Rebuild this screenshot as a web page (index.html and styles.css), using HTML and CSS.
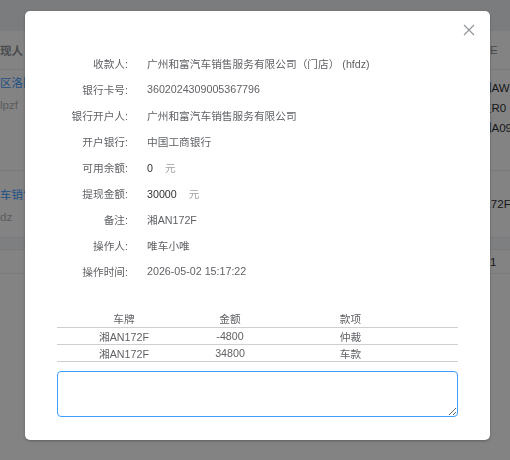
FILE: index.html
```html
<!DOCTYPE html>
<html>

<head>
    <title>提现详情</title>
    <link rel="stylesheet" href="styles.css">
</head>

<body>
    <div class="page">
        <div class="bg_top"></div>
        <div class="bg_row bg_head">
            <div class="bg_left">现人</div>
            <div class="bg_right">E</div>
        </div>
        <div class="bg_row bg_r1">
            <div class="bg_left">
                <div class="link">区洛阳路店</div>
                <div class="sub">lpzf</div>
            </div>
            <div class="bg_right">
                <div>湘AW</div>
                <div>生R0</div>
                <div>湘A09</div>
            </div>
        </div>
        <div class="bg_row bg_r2">
            <div class="bg_left">
                <div class="link">车销售</div>
                <div class="sub">dz</div>
            </div>
            <div class="bg_right"><span class="plate">湘AN172F</span></div>
        </div>
        <div class="bg_band"></div>
        <div class="bg_row bg_r3">
            <div class="bg_left"></div>
            <div class="bg_right">1</div>
        </div>
    </div>

    <div class="mask">
        <div class="dialog">
            <button class="close_btn" aria-label="关闭">
                <svg width="12" height="12" viewBox="0 0 12 12">
                    <path d="M1 1 L11 11 M11 1 L1 11" stroke="#909399" stroke-width="1.1" fill="none"/>
                </svg>
            </button>

            <div class="info">
                <label>收款人:</label>
                <span>广州和富汽车销售服务有限公司（门店） (hfdz)</span>
                <label>银行卡号:</label>
                <span>3602024309005367796</span>
                <label>银行开户人:</label>
                <span>广州和富汽车销售服务有限公司</span>
                <label>开户银行:</label>
                <span>中国工商银行</span>
                <label>可用余额:</label>
                <span><b class="amount">0</b><i class="unit">元</i></span>
                <label>提现金额:</label>
                <span><b class="amount">30000</b><i class="unit">元</i></span>
                <label>备注:</label>
                <span>湘AN172F</span>
                <label>操作人:</label>
                <span>唯车小唯</span>
                <label>操作时间:</label>
                <span>2026-05-02 15:17:22</span>
            </div>

            <table class="detail">
                <tr>
                    <th class="c1">车牌</th>
                    <th class="c2">金额</th>
                    <th class="c3">款项</th>
                </tr>
                <tr>
                    <td class="c1">湘AN172F</td>
                    <td class="c2">-4800</td>
                    <td class="c3">仲裁</td>
                </tr>
                <tr>
                    <td class="c1">湘AN172F</td>
                    <td class="c2">34800</td>
                    <td class="c3">车款</td>
                </tr>
            </table>

            <textarea class="remark"></textarea>
        </div>
    </div>
</body>

</html>
```

FILE: styles.css
```css
body {
    margin: 0;
    width: 510px;
    height: 460px;
    overflow: hidden;
    font-family: "Liberation Sans", "Noto Sans CJK SC", sans-serif;
    background: #fff;
}

/* page behind the dialog */
.page {
    font-size: 11.5px;
    color: #303133;
}

.bg_top {
    height: 31px;
    background: #f0f2f5;
}

.bg_row {
    display: flex;
    justify-content: space-between;
    border-bottom: 1px solid #ebeef5;
    white-space: nowrap;
}

.bg_left {
    width: 60px;
}

.bg_right {
    width: 30px;
    overflow: hidden;
}

.bg_head {
    height: 38px;
    align-items: center;
    font-weight: bold;
    color: #909399;
}

.bg_head .bg_right {
    font-weight: normal;
    color: #909399;
    width: 20px;
}

.bg_r1 {
    height: 100px;
}

.bg_r1 .bg_left {
    padding-top: 3px;
}

.bg_r1 .bg_right {
    padding-top: 8px;
    line-height: 20px;
}

.bg_r2 {
    height: 66px;
}

.bg_r2 .bg_left {
    padding-top: 14px;
}

.bg_r2 .bg_right {
    padding-top: 24px;
}

.plate {
    display: inline-block;
    margin-left: -23px;
}

.link {
    color: #409eff;
    line-height: 20px;
}

.sub {
    color: #b0b3b8;
    margin-top: 6px;
}

.bg_band {
    height: 11px;
    background: #f5f7fa;
    border-bottom: 1px solid #ebeef5;
}

.bg_r3 {
    height: 23px;
    align-items: center;
}

.bg_r3 .bg_right {
    width: 20px;
}

/* dialog */
.mask {
    position: fixed;
    top: 0;
    left: 0;
    right: 0;
    bottom: 0;
    background: rgba(0, 0, 0, 0.485);
    padding: 11px 0 0 25px;
}

.dialog {
    position: relative;
    width: 465px;
    box-sizing: border-box;
    padding: 39px 32px 23px 32px;
    background: #fff;
    border-radius: 5px;
    box-shadow: 0 1px 3px rgba(0, 0, 0, 0.3);
    font-size: 10.7px;
    color: #606266;
}

.close_btn {
    position: absolute;
    top: 12px;
    right: 14px;
    width: 14px;
    height: 14px;
    padding: 1px;
    border: none;
    background: none;
}

.info {
    display: grid;
    grid-template-columns: 71px 1fr;
    column-gap: 19px;
    grid-auto-rows: 26px;
    align-items: center;
}

.info label {
    text-align: right;
    white-space: nowrap;
}

.amount {
    font-weight: normal;
    color: #303133;
}

.unit {
    font-style: normal;
    color: #a0a0a0;
    margin-left: 12px;
}

.detail {
    width: 100%;
    margin-top: 25px;
    border-collapse: collapse;
    table-layout: fixed;
}

.detail th,
.detail td {
    font-weight: normal;
    text-align: center;
    padding: 0;
    border-bottom: 1px solid #cfcfcf;
}

.detail th {
    height: 18px;
}

.detail td {
    height: 16px;
}

.c1 {
    width: 134px;
}

.c2 {
    width: 78px;
}

.c3 {
    padding-right: 26px !important;
}

.remark {
    display: block;
    width: 100%;
    height: 46px;
    box-sizing: border-box;
    margin-top: 9px;
    border: 1px solid #409eff;
    border-radius: 4px;
    outline: none;
}
```
